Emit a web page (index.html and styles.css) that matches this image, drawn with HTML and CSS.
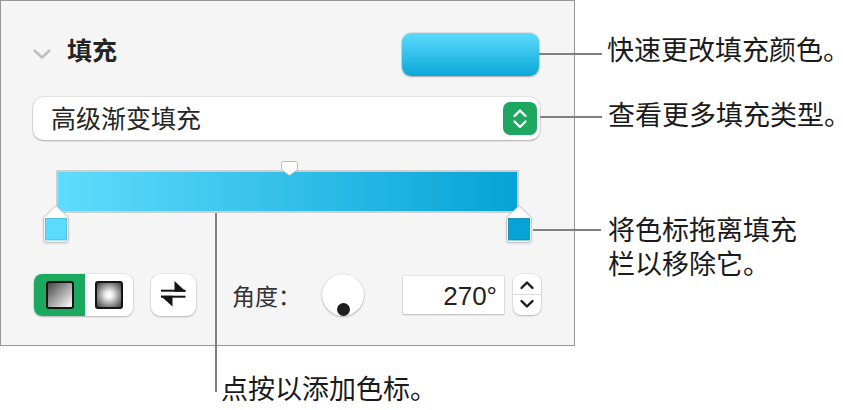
FILE: index.html
```html
<!DOCTYPE html>
<html lang="zh-CN">
<head>
<meta charset="utf-8">
<title>填充</title>
<link rel="stylesheet" href="styles.css">
</head>
<body>
<div class="panel">
  <div class="hdr">
    <svg class="chev" width="18" height="10" viewBox="0 0 18 10"><polyline points="1.5,1.5 9,8.5 16.5,1.5" fill="none" stroke="#bdbdbd" stroke-width="2.4" stroke-linecap="round" stroke-linejoin="round"/></svg>
    <span class="title">填充</span>
    <div class="swatch"></div>
  </div>
  <div class="popup">
    <span class="popup-text">高级渐变填充</span>
    <div class="popbtn">
      <svg width="34" height="33" viewBox="0 0 34 33"><polyline points="11.5,14 17,8.5 22.5,14" fill="none" stroke="#fff" stroke-width="2.3" stroke-linecap="round" stroke-linejoin="round"/><polyline points="11.5,19.5 17,25 22.5,19.5" fill="none" stroke="#fff" stroke-width="2.3" stroke-linecap="round" stroke-linejoin="round"/></svg>
    </div>
  </div>
  <div class="grad">
    <div class="bar">
      <svg class="mid" width="17" height="15" viewBox="0 0 17 15"><path d="M2.5 0.5 H14.5 Q16.5 0.5 16.5 2.5 V8.5 L8.5 14.5 L0.5 8.5 V2.5 Q0.5 0.5 2.5 0.5 Z" fill="#fff" stroke="#bcbcbc" stroke-width="1"/></svg>
      <svg class="stop stop-l" width="26" height="38" viewBox="0 0 26 38"><path d="M13 0.7 L25.3 12.5 V35 Q25.3 37.3 23 37.3 H3 Q0.7 37.3 0.7 35 V12.5 Z" fill="#fff" stroke="#c2c2c2" stroke-width="1"/><rect x="2.5" y="13.5" width="21" height="21.5" fill="#5cdcfd" stroke="#3fb6d8" stroke-width="0.8"/></svg>
      <svg class="stop stop-r" width="26" height="38" viewBox="0 0 26 38"><path d="M13 0.7 L25.3 12.5 V35 Q25.3 37.3 23 37.3 H3 Q0.7 37.3 0.7 35 V12.5 Z" fill="#fff" stroke="#c2c2c2" stroke-width="1"/><rect x="2.5" y="13.5" width="21" height="21.5" fill="#06a4d6" stroke="#0586ae" stroke-width="0.8"/></svg>
    </div>
  </div>
  <div class="ctrls">
    <div class="seg">
      <div class="seg-on"><i class="sq lin"></i></div>
      <div class="seg-off"><i class="sq rad"></i></div>
    </div>
    <div class="swap">
      <svg width="45" height="42" viewBox="0 0 45 42"><rect x="10" y="15.7" width="24.5" height="2" fill="#151515"/><path d="M23.5 7 L23.5 17.7 L35 17.7 Z" fill="#151515"/><rect x="10" y="21.7" width="24.5" height="2" fill="#151515"/><path d="M9.5 21.7 L21.5 21.7 L21.5 32.5 Z" fill="#151515"/></svg>
    </div>
    <span class="lbl">角度：</span>
    <div class="knob"><i class="dot"></i></div>
    <div class="num">270°</div>
    <div class="step">
      <svg width="28" height="41" viewBox="0 0 28 41"><polyline points="8.5,14 14,8.5 19.5,14" fill="none" stroke="#1a1a1a" stroke-width="2.4" stroke-linecap="round" stroke-linejoin="round"/><line x1="0" y1="20.5" x2="28" y2="20.5" stroke="#dedede" stroke-width="1"/><polyline points="8.5,27 14,32.5 19.5,27" fill="none" stroke="#1a1a1a" stroke-width="2.4" stroke-linecap="round" stroke-linejoin="round"/></svg>
    </div>
  </div>
</div>

<div class="line h l1"></div>
<div class="note n1">快速更改填充颜色。</div>
<div class="line h l2"></div>
<div class="note n2">查看更多填充类型。</div>
<div class="line h l3"></div>
<div class="note n3">将色标拖离填充<br>栏以移除它。</div>
<div class="line v l4"></div>
<div class="note n4">点按以添加色标。</div>
</body>
</html>
```
FILE: styles.css
```css
html, body {
  margin: 0;
  padding: 0;
  background: #fff;
}
body {
  position: relative;
  width: 843px;
  height: 410px;
  overflow: hidden;
  font-family: "Noto Sans CJK SC", "Noto Sans", sans-serif;
  color: #262626;
}
.panel {
  box-sizing: border-box;
  width: 575px;
  height: 346px;
  border: 1px solid #979797;
  background: #f5f5f5;
  padding: 32px 33px 0 32px;
}
.hdr {
  display: flex;
  align-items: center;
  height: 43px;
}
.chev {
  display: block;
  margin-top: -2px;
}
.title {
  align-self: flex-start;
  margin-left: 16px;
  font-size: 25px;
  line-height: 33px;
  font-weight: 700;
  color: #242424;
}
.swatch {
  margin-left: auto;
  margin-right: 2px;
  width: 137px;
  height: 43px;
  box-sizing: border-box;
  border-radius: 9px;
  background: linear-gradient(to bottom, #5cdafd, #0ba7d8);
  box-shadow: 0 0 0 1px rgba(0,0,0,0.08), 0 1px 2px rgba(0,0,0,0.25);
}
.popup {
  margin-top: 21px;
  margin-right: 1px;
  height: 43px;
  box-sizing: border-box;
  border-radius: 10px;
  background: #fff;
  box-shadow: 0 0 0 0.5px rgba(0,0,0,0.12), 0 1px 2px rgba(0,0,0,0.25);
  display: flex;
  align-items: center;
  padding: 0 3px 3px 18px;
}
.popup-text {
  font-size: 25px;
  line-height: 36px;
  color: #262626;
}
.popbtn {
  margin-left: auto;
  margin-top: 3px;
  width: 34px;
  height: 33px;
  border-radius: 7px;
  background: #1ea85f;
}
.popbtn svg, .step svg, .swap svg { display: block; }
.grad {
  margin-top: 30px;
  padding: 0 22px 29px 23px;
}
.bar {
  position: relative;
  height: 43px;
  box-sizing: border-box;
  border: 2px solid #cfcfcf;
  background: linear-gradient(to right, #5fdcfd, #06a3d6);
}
.mid {
  position: absolute;
  left: 223px;
  top: -11px;
}
.stop {
  position: absolute;
  top: 33px;
  filter: drop-shadow(0 1px 1px rgba(0,0,0,0.12));
}
.stop-l { left: -15px; }
.stop-r { left: 448px; }
.ctrls {
  margin-top: 30px;
  display: flex;
  align-items: center;
  height: 45px;
}
.seg {
  margin-left: 1px;
  display: flex;
  width: 99px;
  height: 42px;
  border-radius: 8px;
  overflow: hidden;
  background: #fff;
  box-shadow: 0 0 0 0.5px rgba(0,0,0,0.1), 0 1px 2px rgba(0,0,0,0.22);
}
.seg-on, .seg-off {
  display: flex;
  align-items: center;
  justify-content: center;
}
.seg-on {
  width: 51px;
  background: #1ba95f;
}
.seg-off {
  width: 48px;
}
.sq {
  display: block;
  width: 28px;
  height: 28px;
  box-sizing: border-box;
  border: 2.5px solid #141414;
  border-radius: 3px;
}
.lin { background: linear-gradient(135deg, #454545 0%, #9a9a9a 45%, #ffffff 100%); }
.rad { background: radial-gradient(circle at 50% 50%, #ffffff 0%, #f4f4f4 18%, #3a3a3a 100%); }
.swap {
  margin-left: 18px;
  width: 45px;
  height: 42px;
  border-radius: 9px;
  background: #fff;
  box-shadow: 0 0 0 0.5px rgba(0,0,0,0.1), 0 1px 2px rgba(0,0,0,0.22);
}
.lbl {
  margin-left: 36px;
  font-size: 23px;
  line-height: 30px;
  color: #333;
}
.knob {
  position: relative;
  margin-left: 21px;
  width: 42px;
  height: 42px;
  border-radius: 50%;
  background: #fff;
  box-shadow: 0 0 0 0.5px rgba(0,0,0,0.1), 0 1px 2px rgba(0,0,0,0.25);
}
.dot {
  position: absolute;
  left: 14.5px;
  top: 29.5px;
  width: 13px;
  height: 13px;
  border-radius: 50%;
  background: #1e1e1e;
}
.num {
  margin-left: 39px;
  width: 101px;
  height: 38px;
  box-sizing: border-box;
  background: #fff;
  box-shadow: 0 0 0 0.5px rgba(0,0,0,0.12), 0 1px 1.5px rgba(0,0,0,0.2);
  font-family: "Liberation Sans", Arial, sans-serif;
  font-size: 26px;
  line-height: 40px;
  text-align: right;
  padding-right: 7px;
  color: #222;
}
.step {
  margin-left: 9px;
  width: 28px;
  height: 41px;
  border-radius: 8px;
  background: #fff;
  box-shadow: 0 0 0 0.5px rgba(0,0,0,0.1), 0 1px 2px rgba(0,0,0,0.22);
}
.line {
  position: absolute;
  background: #808080;
}
.line.h { height: 2px; }
.line.v { width: 2px; }
.l1 { left: 539px; top: 53px; width: 63px; }
.l2 { left: 540px; top: 116px; width: 62px; }
.l3 { left: 533px; top: 229px; width: 68px; }
.l4 { left: 215px; top: 213px; height: 179px; }
.note {
  position: absolute;
  font-size: 27px;
  line-height: 33.5px;
  color: #1a1a1a;
  white-space: nowrap;
  font-feature-settings: "halt" 1;
}
.n1 { left: 607px; top: 32px; }
.n2 { left: 608px; top: 97px; }
.n3 { left: 608px; top: 212px; }
.n4 { left: 221px; top: 371px; }
```
